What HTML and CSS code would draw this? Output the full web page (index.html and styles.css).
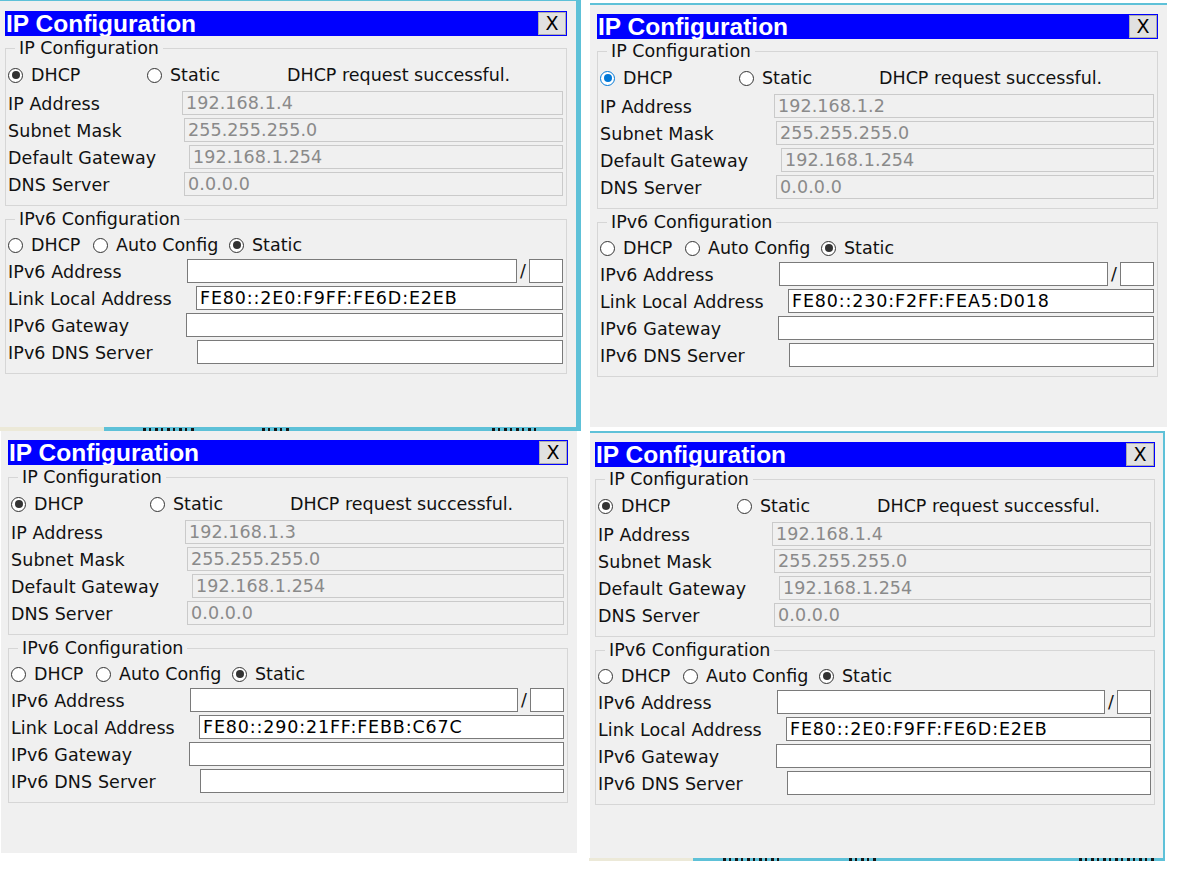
FILE: index.html
```html
<!DOCTYPE html>
<html>
<head>
<meta charset="utf-8">
<link rel="stylesheet" href="styles.css">
</head>
<body>
<div class="desk">

  <div class="under u1">
    <span class="frag fa"></span><span class="frag fb"></span><span class="frag fc"></span>
  </div>
  <div class="under u4">
    <span class="frag fd"></span><span class="frag fe"></span><span class="frag ff"></span>
  </div>

  <!-- Window 1 -->
  <div class="win w1">
    <div class="dlg d1">
      <div class="titlebar"><span class="title">IP Configuration</span><span class="xbtn">X</span></div>
      <fieldset class="grp g4">
        <legend>IP Configuration</legend>
        <div class="radios">
          <span class="opt o-dhcp"><span class="radio on"></span>DHCP</span>
          <span class="opt o-static"><span class="radio"></span>Static</span>
          <span class="msg">DHCP request successful.</span>
        </div>
        <div class="row"><span class="lbl l-ip">IP Address</span><span class="field off">192.168.1.4</span></div>
        <div class="row"><span class="lbl l-mask">Subnet Mask</span><span class="field off">255.255.255.0</span></div>
        <div class="row"><span class="lbl l-gw">Default Gateway</span><span class="field off">192.168.1.254</span></div>
        <div class="row"><span class="lbl l-dns">DNS Server</span><span class="field off">0.0.0.0</span></div>
      </fieldset>
      <fieldset class="grp g6">
        <legend>IPv6 Configuration</legend>
        <div class="radios">
          <span class="opt o-v6dhcp"><span class="radio"></span>DHCP</span>
          <span class="opt o-auto"><span class="radio"></span>Auto Config</span>
          <span class="opt"><span class="radio on"></span>Static</span>
        </div>
        <div class="row"><span class="lbl l-v6ip">IPv6 Address</span><span class="field"></span><span class="slash">/</span><span class="field prefix"></span></div>
        <div class="row"><span class="lbl l-ll">Link Local Address</span><span class="field">FE80::2E0:F9FF:FE6D:E2EB</span></div>
        <div class="row"><span class="lbl l-v6gw">IPv6 Gateway</span><span class="field"></span></div>
        <div class="row"><span class="lbl l-v6dns">IPv6 DNS Server</span><span class="field"></span></div>
      </fieldset>
    </div>
  </div>

  <!-- Window 2 -->
  <div class="win w2">
    <div class="dlg d2">
      <div class="titlebar"><span class="title">IP Configuration</span><span class="xbtn">X</span></div>
      <fieldset class="grp g4">
        <legend>IP Configuration</legend>
        <div class="radios">
          <span class="opt o-dhcp"><span class="radio on focus"></span>DHCP</span>
          <span class="opt o-static"><span class="radio"></span>Static</span>
          <span class="msg">DHCP request successful.</span>
        </div>
        <div class="row"><span class="lbl l-ip">IP Address</span><span class="field off">192.168.1.2</span></div>
        <div class="row"><span class="lbl l-mask">Subnet Mask</span><span class="field off">255.255.255.0</span></div>
        <div class="row"><span class="lbl l-gw">Default Gateway</span><span class="field off">192.168.1.254</span></div>
        <div class="row"><span class="lbl l-dns">DNS Server</span><span class="field off">0.0.0.0</span></div>
      </fieldset>
      <fieldset class="grp g6">
        <legend>IPv6 Configuration</legend>
        <div class="radios">
          <span class="opt o-v6dhcp"><span class="radio"></span>DHCP</span>
          <span class="opt o-auto"><span class="radio"></span>Auto Config</span>
          <span class="opt"><span class="radio on"></span>Static</span>
        </div>
        <div class="row"><span class="lbl l-v6ip">IPv6 Address</span><span class="field"></span><span class="slash">/</span><span class="field prefix"></span></div>
        <div class="row"><span class="lbl l-ll">Link Local Address</span><span class="field">FE80::230:F2FF:FEA5:D018</span></div>
        <div class="row"><span class="lbl l-v6gw">IPv6 Gateway</span><span class="field"></span></div>
        <div class="row"><span class="lbl l-v6dns">IPv6 DNS Server</span><span class="field"></span></div>
      </fieldset>
    </div>
  </div>

  <!-- Window 3 -->
  <div class="win w3">
    <div class="dlg d3">
      <div class="titlebar"><span class="title">IP Configuration</span><span class="xbtn">X</span></div>
      <fieldset class="grp g4">
        <legend>IP Configuration</legend>
        <div class="radios">
          <span class="opt o-dhcp"><span class="radio on"></span>DHCP</span>
          <span class="opt o-static"><span class="radio"></span>Static</span>
          <span class="msg">DHCP request successful.</span>
        </div>
        <div class="row"><span class="lbl l-ip">IP Address</span><span class="field off">192.168.1.3</span></div>
        <div class="row"><span class="lbl l-mask">Subnet Mask</span><span class="field off">255.255.255.0</span></div>
        <div class="row"><span class="lbl l-gw">Default Gateway</span><span class="field off">192.168.1.254</span></div>
        <div class="row"><span class="lbl l-dns">DNS Server</span><span class="field off">0.0.0.0</span></div>
      </fieldset>
      <fieldset class="grp g6">
        <legend>IPv6 Configuration</legend>
        <div class="radios">
          <span class="opt o-v6dhcp"><span class="radio"></span>DHCP</span>
          <span class="opt o-auto"><span class="radio"></span>Auto Config</span>
          <span class="opt"><span class="radio on"></span>Static</span>
        </div>
        <div class="row"><span class="lbl l-v6ip">IPv6 Address</span><span class="field"></span><span class="slash">/</span><span class="field prefix"></span></div>
        <div class="row"><span class="lbl l-ll">Link Local Address</span><span class="field">FE80::290:21FF:FEBB:C67C</span></div>
        <div class="row"><span class="lbl l-v6gw">IPv6 Gateway</span><span class="field"></span></div>
        <div class="row"><span class="lbl l-v6dns">IPv6 DNS Server</span><span class="field"></span></div>
      </fieldset>
    </div>
  </div>

  <!-- Window 4 -->
  <div class="win w4">
    <div class="dlg d4">
      <div class="titlebar"><span class="title">IP Configuration</span><span class="xbtn">X</span></div>
      <fieldset class="grp g4">
        <legend>IP Configuration</legend>
        <div class="radios">
          <span class="opt o-dhcp"><span class="radio on"></span>DHCP</span>
          <span class="opt o-static"><span class="radio"></span>Static</span>
          <span class="msg">DHCP request successful.</span>
        </div>
        <div class="row"><span class="lbl l-ip">IP Address</span><span class="field off">192.168.1.4</span></div>
        <div class="row"><span class="lbl l-mask">Subnet Mask</span><span class="field off">255.255.255.0</span></div>
        <div class="row"><span class="lbl l-gw">Default Gateway</span><span class="field off">192.168.1.254</span></div>
        <div class="row"><span class="lbl l-dns">DNS Server</span><span class="field off">0.0.0.0</span></div>
      </fieldset>
      <fieldset class="grp g6">
        <legend>IPv6 Configuration</legend>
        <div class="radios">
          <span class="opt o-v6dhcp"><span class="radio"></span>DHCP</span>
          <span class="opt o-auto"><span class="radio"></span>Auto Config</span>
          <span class="opt"><span class="radio on"></span>Static</span>
        </div>
        <div class="row"><span class="lbl l-v6ip">IPv6 Address</span><span class="field"></span><span class="slash">/</span><span class="field prefix"></span></div>
        <div class="row"><span class="lbl l-ll">Link Local Address</span><span class="field">FE80::2E0:F9FF:FE6D:E2EB</span></div>
        <div class="row"><span class="lbl l-v6gw">IPv6 Gateway</span><span class="field"></span></div>
        <div class="row"><span class="lbl l-v6dns">IPv6 DNS Server</span><span class="field"></span></div>
      </fieldset>
    </div>
  </div>

</div>
</body>
</html>
```

FILE: styles.css
```css
html, body {
  margin: 0;
  padding: 0;
  background: #ffffff;
}

.desk {
  position: relative;
  width: 1184px;
  height: 880px;
  overflow: hidden;
  font-family: "DejaVu Sans", "Liberation Sans", sans-serif;
  color: #111;
}

/* strips of the application lying under the dialogs */
.under {
  position: absolute;
  height: 4px;
  overflow: hidden;
  display: flex;
  background: linear-gradient(to right, #ece9d8 0, #ece9d8 104px, #5ec1d8 104px);
}
.u1 { left: 0; top: 427px; width: 581px; }
.u4 { left: 589px; top: 858px; width: 576px; height: 3px; }

.frag {
  flex: none;
  height: 3px;
  margin-top: 1px;
  background: repeating-linear-gradient(to right, #161616 0, #161616 3px, transparent 3px, transparent 6px, #161616 6px, #161616 8px, transparent 8px, transparent 12px);
}
.fa { margin-left: 143px; width: 52px; }
.fb { margin-left: 67px; width: 28px; }
.fc { margin-left: 202px; width: 48px; }
.fd { margin-left: 134px; width: 56px; margin-top: 0; }
.fe { margin-left: 70px; width: 30px; margin-top: 0; }
.ff { margin-left: 200px; width: 76px; margin-top: 0; }

/* dialog windows (a collage of separate screenshots) */
.win {
  position: absolute;
  background: #f0f0f0;
  box-sizing: border-box;
}
.w1 {
  left: 0; top: 0; width: 581px; height: 427px;
  border-top: 1px solid #5ec1d8;
  border-right: 5px solid #5ec1d8;
  padding: 10px 0 0 5px;
}
.w2 {
  left: 590px; top: 3px; width: 577px; height: 424px;
  border-top: 2px solid #5ec1d8;
  padding: 9px 0 0 7px;
}
.w3 {
  left: 1px; top: 431px; width: 576px; height: 422px;
  padding: 9px 0 0 7px;
}
.w4 {
  left: 590px; top: 431px; width: 575px; height: 427px;
  border-top: 2px solid #5ec1d8;
  border-right: 2px solid #5ec1d8;
  padding: 9px 0 0 5px;
}

.dlg { width: 562px; }
.d2 { width: 561px; }
.d3 { width: 560px; }
.d4 { width: 560px; }

.titlebar {
  height: 25px;
  background: #0000ff;
  display: flex;
  align-items: center;
  justify-content: space-between;
  overflow: hidden;
}
.title {
  font-family: "Liberation Sans", sans-serif;
  font-weight: bold;
  font-size: 24.5px;
  line-height: 25px;
  color: #ffffff;
  padding-left: 1px;
}
.xbtn {
  width: 28px;
  height: 23px;
  box-sizing: border-box;
  margin-right: 1px;
  background: #e1e1e1;
  border: 1px solid #adadad;
  font-size: 19px;
  line-height: 21px;
  text-align: center;
  color: #000;
}

/* group boxes */
.grp {
  margin: 2px 0 0 0;
  min-width: 0;
  border: 1px solid #d6d6d6;
  padding: 6px 3px 9px 2px;
  font-size: 17.5px;
}
.g6 {
  margin-top: 3px;
  padding-top: 5px;
}
.grp legend {
  margin-left: 7px;
  padding: 0 4px;
  line-height: 20px;
  font-size: 17.5px;
}

.radios {
  height: 20px;
  box-sizing: border-box;
  padding-top: 2px;
  display: flex;
  align-items: center;
  line-height: 18px;
  white-space: nowrap;
}
.g4 .radios { margin-bottom: 7px; }
.g6 .radios { margin-bottom: 5px; }

.opt {
  display: flex;
  align-items: center;
  gap: 8px;
}
.o-dhcp { width: 139px; }
.o-static { width: 140px; }
.o-v6dhcp { width: 85px; }
.o-auto { width: 136px; }

.radio {
  width: 15px;
  height: 15px;
  box-sizing: border-box;
  border-radius: 50%;
  border: 1px solid #333;
  background: #fff;
  display: flex;
  align-items: center;
  justify-content: center;
  flex: none;
}
.radio.on::after {
  content: "";
  width: 8px;
  height: 8px;
  border-radius: 50%;
  background: #333;
}
.radio.focus {
  border-color: #0078d7;
}
.radio.focus::after {
  background: #0078d7;
}

.row {
  display: flex;
  align-items: center;
  height: 24px;
  margin-top: 3px;
}
.radios + .row { margin-top: 0; }

.lbl {
  flex: none;
  white-space: nowrap;
  line-height: 20px;
  padding-top: 2px;
  letter-spacing: 0.1px;
}
.l-ip { width: 174px; }
.l-mask { width: 176px; }
.l-gw { width: 181px; }
.l-dns { width: 176px; }
.l-v6ip { width: 179px; }
.l-ll { width: 188px; }
.l-v6gw { width: 178px; }
.l-v6dns { width: 189px; }

.field {
  flex: 1;
  height: 24px;
  box-sizing: border-box;
  border: 1px solid #7a7a7a;
  background: #ffffff;
  padding: 0 3px;
  font-size: 17.5px;
  letter-spacing: 0.85px;
  line-height: 22px;
  color: #000;
  white-space: nowrap;
  overflow: hidden;
}
.field.off {
  background: #f0f0f0;
  border-color: #cacaca;
  color: #8a8a8a;
  letter-spacing: 0.1px;
}
.field.prefix {
  flex: none;
  width: 34px;
}
.slash {
  flex: none;
  width: 12px;
  text-align: center;
  font-size: 17.5px;
}
```
